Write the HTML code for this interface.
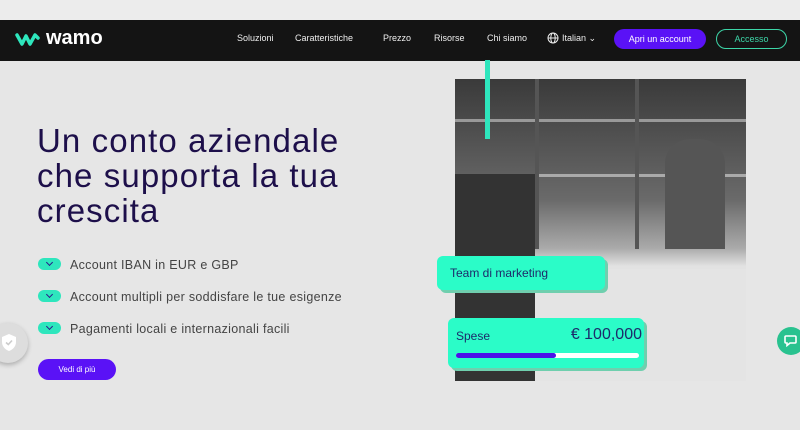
<!DOCTYPE html>
<html><head><meta charset="utf-8"><style>
*{margin:0;padding:0;box-sizing:border-box}
body{width:800px;height:430px;overflow:hidden;background:#e6e6e6;font-family:"Liberation Sans",sans-serif;position:relative}
.top{position:absolute;left:0;top:0;width:800px;height:20px;background:#ececec}
nav{position:absolute;left:0;top:20px;width:800px;height:41px;background:#141414;color:#fff}
nav .l{position:absolute;top:13px;font-size:9px;color:#eee}
.btn1{position:absolute;left:614px;top:29px;width:92px;height:20px;border-radius:10px;background:#5a12f6;color:#fff;font-size:9px;text-align:center;line-height:20px}
.btn2{position:absolute;left:716px;top:29px;width:71px;height:20px;border-radius:10px;border:1px solid #3dd6a8;color:#3dd6a8;font-size:9px;text-align:center;line-height:18px}
h1{position:absolute;left:37px;top:123px;font-size:33px;line-height:35px;font-weight:400;color:#1d0f4a;letter-spacing:1.1px}
.li{position:absolute;left:38px;font-size:12.5px;color:#444;letter-spacing:.3px}
.li i{display:inline-block;width:23px;height:12px;border-radius:6px;background:#2ee6bd;vertical-align:-1px;margin-right:9px;position:relative}
.li i:after{content:"";position:absolute;left:9px;top:2px;width:4px;height:4px;border-right:1.5px solid #2a1b8a;border-bottom:1.5px solid #2a1b8a;transform:rotate(45deg)}
.vedi{position:absolute;left:38px;top:359px;width:78px;height:21px;border-radius:11px;background:#5a12f6;color:#fff;font-size:8px;text-align:center;line-height:21px}
.photo{position:absolute;left:455px;top:79px;width:291px;height:302px;background:linear-gradient(#3a3a3a 0,#6a6a6a 40%,#aaa 56%,#e2e2e2 62%,#ddd 100%);overflow:hidden}
.card{position:absolute;background:#2bfcc8;border-radius:6px;box-shadow:3px 3px 0 #6fcfae;color:#1d2a6a}
.chat{position:absolute;left:777px;top:327px;width:28px;height:28px;border-radius:50%;background:#29c28f}
.shield{position:absolute;left:-12px;top:323px;width:40px;height:40px;border-radius:50%;background:#ddd;box-shadow:0 2px 5px rgba(0,0,0,.25)}
</style></head><body>
<div class="top"></div>
<nav>
<svg style="position:absolute;left:15px;top:12px" width="26" height="14" viewBox="0 0 26 14"><path d="M2 3 L7 12 L11 4 L15 12 L20 3 L23 6" stroke="#2ee6bd" stroke-width="3.5" fill="none" stroke-linecap="round" stroke-linejoin="round"/></svg>
<div style="position:absolute;left:46px;top:7px;font-size:20px;font-weight:700;color:#fff">wamo</div>
<span class="l" style="left:237px">Soluzioni</span>
<span class="l" style="left:295px">Caratteristiche</span>
<span class="l" style="left:383px">Prezzo</span>
<span class="l" style="left:434px">Risorse</span>
<span class="l" style="left:487px">Chi siamo</span>
<svg style="position:absolute;left:547px;top:12px" width="12" height="12" viewBox="0 0 12 12" fill="none" stroke="#eee" stroke-width="1"><circle cx="6" cy="6" r="5"/><ellipse cx="6" cy="6" rx="2.2" ry="5"/><path d="M1 6h10"/></svg>
<span class="l" style="left:562px">Italian ⌄</span>
</nav>
<div class="btn1">Apri un account</div>
<div class="btn2">Accesso</div>
<h1>Un conto aziendale<br>che supporta la tua<br>crescita</h1>
<div class="li" style="top:258px"><i></i>Account IBAN in EUR e GBP</div>
<div class="li" style="top:290px"><i></i>Account multipli per soddisfare le tue esigenze</div>
<div class="li" style="top:322px"><i></i>Pagamenti locali e internazionali facili</div>
<div class="vedi">Vedi di più</div>
<div class="shield"><svg style="position:absolute;left:13px;top:10px" width="16" height="19" viewBox="0 0 16 19"><path d="M8 1 L15 4 V9 C15 14 11 17 8 18 C5 17 1 14 1 9 V4Z" fill="#fff"/><path d="M5 9.5 L7.3 11.5 L11 7.5" stroke="#ccc" stroke-width="1.6" fill="none"/></svg></div>
<div class="photo">
<div style="position:absolute;left:0;top:40px;width:291px;height:3px;background:#999"></div>
<div style="position:absolute;left:0;top:95px;width:291px;height:3px;background:#aaa"></div>
<div style="position:absolute;left:80px;top:0;width:4px;height:170px;background:#555"></div>
<div style="position:absolute;left:180px;top:0;width:4px;height:170px;background:#555"></div>
<div style="position:absolute;left:0;top:95px;width:80px;height:207px;background:#333"></div>
<div style="position:absolute;left:210px;top:60px;width:60px;height:110px;background:#555;border-radius:25px 25px 0 0"></div>
<div style="position:absolute;left:80px;top:190px;width:211px;height:112px;background:#e4e4e4"></div>
</div>
<div style="position:absolute;left:485px;top:60px;width:5px;height:79px;background:#2ee6bd"></div>
<div class="card" style="left:437px;top:256px;width:168px;height:34px"><span style="position:absolute;left:13px;top:10px;font-size:12px">Team di marketing</span></div>
<div class="card" style="left:448px;top:318px;width:196px;height:50px">
<span style="position:absolute;left:8px;top:11px;font-size:12px">Spese</span>
<span style="position:absolute;right:2px;top:8px;font-size:16px">€ 100,000</span>
<div style="position:absolute;left:8px;top:35px;width:183px;height:5px;border-radius:3px;background:#fff"><div style="width:100px;height:5px;border-radius:3px;background:#4a12e8"></div></div>
</div>
<div class="chat"><svg style="position:absolute;left:7px;top:8px" width="13" height="12" viewBox="0 0 13 12" fill="none" stroke="#fff" stroke-width="1.6"><path d="M2 1h9a1 1 0 0 1 1 1v5a1 1 0 0 1-1 1H6L3 10.5V8H2a1 1 0 0 1-1-1V2a1 1 0 0 1 1-1z"/></svg></div>
</body></html>
